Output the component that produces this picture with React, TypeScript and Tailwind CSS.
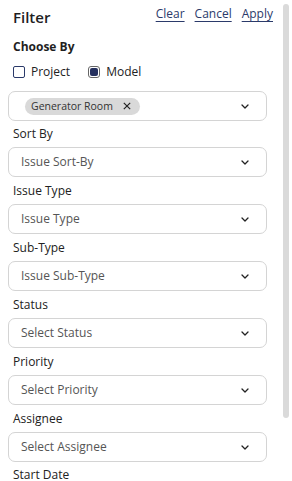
import React from "react";

const Chevron = () => (
  <svg width="8" height="5" viewBox="0 0 8 5" fill="none" className="shrink-0">
    <path d="M1 1 L4 4 L7 1" stroke="#222" strokeWidth="1.3" strokeLinecap="round" strokeLinejoin="round" />
  </svg>
);

const SelectBox = ({ placeholder }: { placeholder: string }) => (
  <div className="flex h-[30px] shrink-0 items-center justify-between rounded-[7px] border border-[#d4d4d4] bg-white pl-[12px] pr-[17px]">
    <span className="text-[12px] leading-[16px] text-[#555]">{placeholder}</span>
    <Chevron />
  </div>
);

const Label = ({ text, h }: { text: string; h: string }) => (
  <div className={`flex shrink-0 items-center pl-[5px] text-[12px] leading-[16px] text-[#222] ${h}`}>{text}</div>
);

const Field = ({ label, placeholder }: { label: string; placeholder: string }) => (
  <div className="flex shrink-0 flex-col">
    <Label text={label} h="h-[27px]" />
    <SelectBox placeholder={placeholder} />
  </div>
);

export default function App() {
  return (
    <div
      className="flex h-[481px] w-[292px] overflow-hidden bg-white"
      style={{ fontFamily: '"Open Sans", "Noto Sans", sans-serif' }}
    >
      <div className="flex w-[280px] shrink-0 flex-col pl-[8px] pr-[13px]">
        <div className="flex h-[27px] shrink-0 items-start justify-between pl-[5px]">
          <span className="mt-[7px] text-[15px] font-semibold leading-[20px] text-[#1f1f1f]">Filter</span>
          <div className="mr-[-6px] mt-[6px] flex gap-[10px] text-[12px] leading-[16px] text-[#2b3a6a]">
            <span className="underline underline-offset-[3px]">Clear</span>
            <span className="underline underline-offset-[3px]">Cancel</span>
            <span className="underline underline-offset-[3px]">Apply</span>
          </div>
        </div>
        <div className="mt-[11px] flex h-[18px] shrink-0 items-center pl-[5px] text-[12px] font-bold leading-[18px] text-[#1f1f1f]">
          Choose By
        </div>
        <div className="mt-[7px] flex h-[18px] shrink-0 items-center pl-[5px] text-[12px] leading-[16px] text-[#222]">
          <div className="flex items-center gap-[6px]">
            <span className="h-[12px] w-[12px] rounded-[2px] border border-[#2b3a6a] bg-white" />
            <span>Project</span>
          </div>
          <div className="ml-[18px] flex items-center gap-[6px]">
            <span className="flex h-[12px] w-[12px] items-center justify-center rounded-[3px] border border-[#666] bg-white">
              <span className="h-[8px] w-[8px] rounded-[2px] bg-[#25305e]" />
            </span>
            <span>Model</span>
          </div>
        </div>
        <div className="mt-[10px] flex h-[30px] shrink-0 items-center justify-between rounded-[7px] border border-[#d4d4d4] bg-white pl-[16px] pr-[17px]">
          <span className="flex h-[17px] items-center gap-[10px] rounded-full bg-[#d9d9d9] pl-[6px] pr-[9px] text-[10.5px] leading-[14px] text-[#333]">
            Generator Room
            <svg width="8" height="8" viewBox="0 0 8 8">
              <path d="M0.8 0.8 L7.2 7.2 M7.2 0.8 L0.8 7.2" stroke="#222" strokeWidth="1.2" />
            </svg>
          </span>
          <Chevron />
        </div>
        <div className="flex shrink-0 flex-col">
          <Label text="Sort By" h="h-[26px]" />
          <SelectBox placeholder="Issue Sort-By" />
        </div>
        <Field label="Issue Type" placeholder="Issue Type" />
        <Field label="Sub-Type" placeholder="Issue Sub-Type" />
        <Field label="Status" placeholder="Select Status" />
        <Field label="Priority" placeholder="Select Priority" />
        <Field label="Assignee" placeholder="Select Assignee" />
        <Label text="Start Date" h="h-[26px]" />
      </div>
      <div className="w-[12px] shrink-0 pt-[4px]">
        <div className="ml-[3px] h-[414px] w-[6px] rounded-full bg-[#dadada]" />
      </div>
    </div>
  );
}
